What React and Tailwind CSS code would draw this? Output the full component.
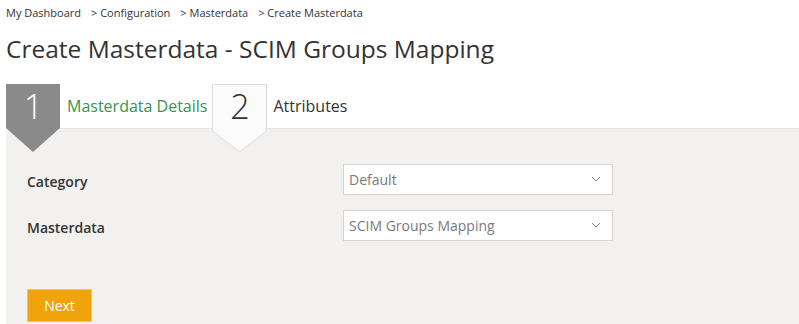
import React from "react";

function Step({ num, active }) {
  return (
    <div className="relative w-[55px] h-[44px] shrink-0">
      <svg className="absolute left-0 top-0" width="55" height="69" viewBox="0 0 55 69">
        {active ? (
          <polygon points="0,0 54,0 54,44 27,68 0,44" fill="#8a8a8a" />
        ) : (
          <polygon points="0.5,0.5 54.5,0.5 54.5,47 27.5,68 0.5,47" fill="#fbfbfb" stroke="#dcdcdc" strokeWidth="1" />
        )}
      </svg>
      <div className={`relative flex items-center justify-center h-[44px] text-[34px] leading-none font-light ${active ? "text-white" : "text-[#333]"}`}>
        {num}
      </div>
    </div>
  );
}

function Select({ value }) {
  return (
    <div className="w-[270px] h-[31px] bg-white border border-[#d4d4d4] flex items-center justify-between pl-[5px] pr-[11px]">
      <span className="text-[14px] text-[#7a7a7a]">{value}</span>
      <svg width="10" height="6" viewBox="0 0 10 6">
        <polyline points="1,1 5,5 9,1" fill="none" stroke="#888" strokeWidth="1" />
      </svg>
    </div>
  );
}

export default function App() {
  return (
    <div className="w-[799px] h-[324px] bg-white overflow-hidden" style={{ fontFamily: '"Segoe UI", "Open Sans", "Noto Sans", sans-serif' }}>
      <div className="pl-[6px] pt-[5px] text-[11px] text-[#333] flex gap-[10px]">
        <span>My Dashboard</span>
        <span>&gt; Configuration</span>
        <span>&gt; Masterdata</span>
        <span>&gt; Create Masterdata</span>
      </div>
      <h1 className="pl-[6px] mt-[12px] text-[24.5px] leading-[30px] text-[#333] font-normal">
        Create Masterdata - SCIM Groups Mapping
      </h1>
      <div className="mt-[20px] pl-[6px] flex items-center h-[44px]">
        <Step num="1" active />
        <span className="ml-[6px] mr-[5px] text-[16px] text-[#38924c]">Masterdata Details</span>
        <Step num="2" />
        <span className="ml-[6px] text-[16px] text-[#333]">Attributes</span>
      </div>
      <div className="ml-[6px] bg-[#f2f1f0] border-t border-[#e6e4e2] h-[200px] pl-[21px] pt-[35px]">
        <div className="flex items-center h-[31px]">
          <span className="w-[316px] pt-[5px] text-[14px] font-semibold text-[#333]">Category</span>
          <Select value="Default" />
        </div>
        <div className="flex items-center h-[31px] mt-[15px]">
          <span className="w-[316px] pt-[5px] text-[14px] font-semibold text-[#333]">Masterdata</span>
          <Select value="SCIM Groups Mapping" />
        </div>
        <button className="mt-[48px] w-[65px] h-[33px] bg-[#f0a30a] border border-[#f5c35f] text-white text-[14px]">
          Next
        </button>
      </div>
    </div>
  );
}
